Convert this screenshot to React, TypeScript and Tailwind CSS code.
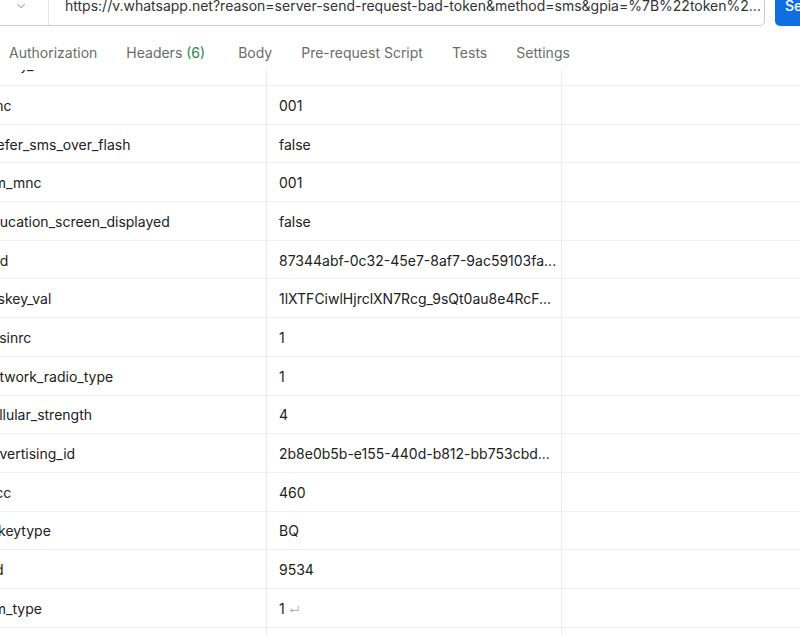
import React from "react";
import { ChevronDown } from "lucide-react";

const rows: [string, React.ReactNode][] = [
  ["mnc", "001"],
  ["prefer_sms_over_flash", "false"],
  ["sim_mnc", "001"],
  ["education_screen_displayed", "false"],
  ["fdid", "87344abf-0c32-45e7-8af7-9ac59103fa..."],
  ["e_skey_val", "1lXTFCiwlHjrclXN7Rcg_9sQt0au8e4RcF..."],
  ["hasinrc", "1"],
  ["network_radio_type", "1"],
  ["cellular_strength", "4"],
  ["advertising_id", "2b8e0b5b-e155-440d-b812-bb753cbd..."],
  ["mcc", "460"],
  ["e_keytype", "BQ"],
  ["pid", "9534"],
  [
    "sim_type",
    <span>
      1 <span className="text-[11px] text-[#b0b0b0]">↵</span>
    </span>,
  ],
  ["rc", "0"],
];

function Row({ k, v }: { k: string; v: React.ReactNode }) {
  return (
    <div className="flex h-[38.7px] shrink-0 border-b border-[#efefef]">
      <div className="w-[296px] shrink-0 border-r border-[#ebebeb] pl-[12px] pt-[1px] flex items-center whitespace-nowrap overflow-hidden">
        {k}
      </div>
      <div className="w-[295px] shrink-0 border-r border-[#ebebeb] pl-[12px] pt-[1px] flex items-center whitespace-nowrap overflow-hidden">
        {v}
      </div>
      <div className="w-[300px] shrink-0" />
    </div>
  );
}

function PartialRow() {
  return (
    <div className="flex h-[16px] shrink-0 border-b border-[#efefef]">
      <div className="w-[296px] shrink-0 border-r border-[#ebebeb] pl-[12px] whitespace-nowrap overflow-hidden">
        <div className="-mt-[15px] leading-[20px]">e_skey_id</div>
      </div>
      <div className="w-[295px] shrink-0 border-r border-[#ebebeb] pl-[12px] whitespace-nowrap overflow-hidden">
        <div className="-mt-[15px] leading-[20px]">0</div>
      </div>
      <div className="w-[300px] shrink-0" />
    </div>
  );
}

export default function App() {
  return (
    <div
      className="w-[800px] h-[635px] overflow-hidden bg-white text-[14px] text-[#212121]"
      style={{ fontFamily: "Inter, 'Noto Sans', sans-serif" }}
    >
      {/* URL bar */}
      <div className="flex -mt-[15px] h-[41px] gap-[10px] shrink-0">
        <div className="-ml-[8px] w-[773px] shrink-0 h-[41px] border border-[#cccccc] rounded-[5px] flex items-center">
          <div className="w-[56px] h-full border-r border-[#e6e6e6] flex items-center justify-end pr-[20px] text-[#7a7a7a]">
            <ChevronDown size={14} strokeWidth={1.5} />
          </div>
          <div className="pl-[16px] whitespace-nowrap text-[#333333]">
            https://v.whatsapp.net?reason=server-send-request-bad-token&amp;method=sms&amp;gpia=%7B%22token%2...
          </div>
        </div>
        <div className="w-[90px] shrink-0 h-[41px] bg-[#0f6fe0] rounded-[5px] text-white flex items-center pl-[10px] font-medium">
          Send
        </div>
      </div>

      {/* Tabs */}
      <div className="h-[44px] pt-[8px] flex items-center pl-[9px] text-[#6b6b6b] whitespace-nowrap">
        <div>Authorization</div>
        <div className="ml-[29px] pr-[4px]">
          Headers <span className="text-[#1f8a4c]">(6)</span>
        </div>
        <div className="ml-[29px]">Body</div>
        <div className="ml-[29px]">Pre-request Script</div>
        <div className="ml-[29px]">Tests</div>
        <div className="ml-[29px]">Settings</div>
      </div>

      {/* Table */}
      <div className="h-[600px] overflow-hidden">
        <div className="-ml-[29px] flex flex-col">
          <PartialRow />
          {rows.map(([k, v]) => (
            <Row key={k} k={k} v={v} />
          ))}
        </div>
      </div>
    </div>
  );
}
